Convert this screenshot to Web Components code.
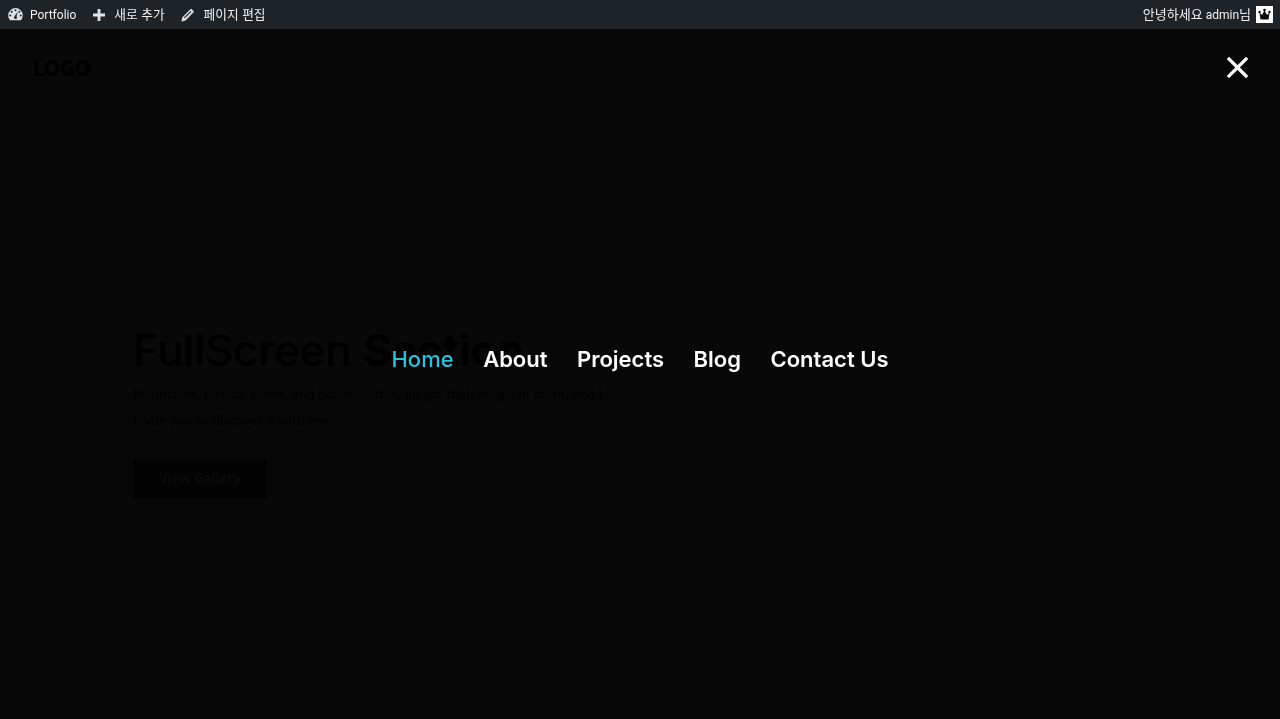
<!DOCTYPE html>
<html lang="ko">
<head>
<meta charset="utf-8">
<title>FullScreen Section</title>
<style>
  html, body { margin: 0; height: 100%; }
  body { background: #080808; overflow: hidden; }
</style>
</head>
<body>
<admin-bar>
  <bar-item slot="left" label="Portfolio" gap="7" latin>
    <svg slot="icon" width="15" height="15" viewBox="0 0 15 15"><path fill="#dfe0e1" d="M7.500 1A7.300 7.300 0 0 0 .2 8.300c0 1.900.7 3.600 1.900 4.900h10.800a7.300 7.300 0 0 0 1.900-4.900A7.300 7.300 0 0 0 7.500 1Z"/><g fill="#1d2327"><circle cx="7.500" cy="3.200" r="1"/><circle cx="3.700" cy="4.700" r="1"/><circle cx="11.300" cy="4.700" r="1"/><circle cx="2.300" cy="8.400" r="1"/><circle cx="12.700" cy="8.400" r="1"/><path d="M9.800 4.600 8.500 9.300a1.500 1.500 0 1 1-2 0Z"/></g></svg>
  </bar-item>
  <bar-item slot="left" label="새로 추가" gap="9">
    <svg slot="icon" style="margin-left:1px" width="12" height="12" viewBox="0 0 12 12" fill="#e4e5e6"><path d="M4.600 0h2.800v4.600H12v2.800H7.400V12H4.600V7.400H0V4.600h4.600Z"/></svg>
  </bar-item>
  <bar-item slot="left" label="페이지 편집" gap="10">
    <svg slot="icon" width="13" height="14" viewBox="0 0 13 14"><path fill="#dfe0e1" stroke="#dfe0e1" stroke-width=".6" stroke-linejoin="round" d="M.8 13.200 1.600 9.300 9.400 1.500a1 1 0 0 1 1.400 0l1.400 1.400a1 1 0 0 1 0 1.400L4.500 12.200Z"/><path fill="none" stroke="#1d2327" stroke-width="1.200" d="M3.300 9.900 10 3.400"/></svg>
  </bar-item>
  <bar-greeting slot="right"></bar-greeting>
</admin-bar>

<site-hero>
  <site-logo slot="logo">LOGO</site-logo>
  <span slot="title">FullScreen <b>Section</b></span>
  <span slot="text">Mountains, forests, rivers, and oceans – they all got their magic in them, and I<br>invite you to discover it with me.</span>
  <span slot="action">View Gallery</span>
</site-hero>

<menu-overlay>
  <nav-link active>Home</nav-link>
  <nav-link>About</nav-link>
  <nav-link>Projects</nav-link>
  <nav-link>Blog</nav-link>
  <nav-link>Contact Us</nav-link>
</menu-overlay>

<script>
const KO_STACK = '"Noto Sans CJK KR", "Noto Sans", sans-serif';

class AdminBar extends HTMLElement {
  constructor() {
    super();
    this.attachShadow({ mode: 'open' });
  }
  connectedCallback() {
    this.shadowRoot.innerHTML = `
      <style>
        :host {
          position: fixed;
          top: 0;
          left: 0;
          right: 0;
          z-index: 10;
          display: flex;
          justify-content: space-between;
          align-items: center;
          height: 29px;
          background: #1d2327;
          color: #f0f0f1;
          font: 12.7px/25px ${KO_STACK};
        }
        .left { display: flex; gap: 16px; padding-left: 8px; }
        .right { display: flex; padding-right: 7px; }
      </style>
      <div class="left"><slot name="left"></slot></div>
      <div class="right"><slot name="right"></slot></div>
    `;
  }
}

class BarItem extends HTMLElement {
  constructor() {
    super();
    this.attachShadow({ mode: 'open' });
  }
  connectedCallback() {
    const gap = this.getAttribute('gap') || 7;
    this.shadowRoot.innerHTML = `
      <style>
        :host { display: flex; align-items: center; height: 29px; gap: ${gap}px; }
        span { margin-bottom: 2px; }
        :host([latin]) span { font: 12px/25px Roboto, sans-serif; margin: 2px 0 0; }
        ::slotted(svg) { display: block; }
      </style>
      <slot name="icon"></slot>
      <span>${this.getAttribute('label')}</span>
    `;
  }
}

class BarGreeting extends HTMLElement {
  constructor() {
    super();
    this.attachShadow({ mode: 'open' });
  }
  connectedCallback() {
    this.shadowRoot.innerHTML = `
      <style>
        :host { display: flex; align-items: center; gap: 5px; height: 29px; }
        .name { display: flex; gap: 3px; font-size: 13px; }
        .latin { font: 12px/25px Roboto, sans-serif; }
        .avatar { display: block; width: 17px; height: 17px; background: #fff; }
      </style>
      <div class="name"><span>안녕하세요</span><span><span class="latin">admin</span>님</span></div>
      <svg class="avatar" viewBox="0 0 17 17"><g fill="#0b0b0b"><circle cx="8.500" cy="4" r="1.300"/><circle cx="3.500" cy="6" r="1.200"/><circle cx="13.500" cy="6" r="1.200"/><path d="M3.500 6.500 6 9 8.500 4.500 11 9 13.500 6.500 12.500 13.500H4.500Z"/></g></svg>
    `;
  }
}

class SiteHero extends HTMLElement {
  constructor() {
    super();
    this.attachShadow({ mode: 'open' });
  }
  connectedCallback() {
    this.shadowRoot.innerHTML = `
      <style>
        :host {
          display: block;
          height: 719px;
          box-sizing: border-box;
          padding-top: 53px;
          color: #000;
        }
        .head { padding-left: 33px; height: 29px; }
        .body { padding: 238px 0 0 133px; }
        h1 {
          margin: 0;
          font: 500 44px/60px Inter, "Liberation Sans", sans-serif;
          letter-spacing: -0.28px;
          white-space: nowrap;
        }
        p {
          margin: 1px 0 0;
          font: 12.9px/26px "Noto Sans CJK KR", "Noto Sans", sans-serif;
          white-space: nowrap;
        }
        .btn {
          display: flex;
          align-items: center;
          justify-content: center;
          box-sizing: border-box;
          width: 134px;
          height: 40px;
          margin-top: 26px;
          padding-bottom: 3px;
          background: #030303;
          color: #0c0c0c;
          font: 700 13.2px "Noto Sans CJK KR", "Noto Sans", sans-serif;
        }
      </style>
      <div class="head"><slot name="logo"></slot></div>
      <div class="body">
        <h1><slot name="title"></slot></h1>
        <p><slot name="text"></slot></p>
        <div class="btn"><slot name="action"></slot></div>
      </div>
    `;
  }
}

class SiteLogo extends HTMLElement {
  constructor() {
    super();
    this.attachShadow({ mode: 'open' }).innerHTML = `
      <style>
        :host { display: block; font: 700 20.6px/28px "Noto Sans CJK KR", "Noto Sans", sans-serif; color: #000; }
      </style>
      <slot></slot>
    `;
  }
}

class MenuOverlay extends HTMLElement {
  constructor() {
    super();
    this.attachShadow({ mode: 'open' });
  }
  connectedCallback() {
    this.shadowRoot.innerHTML = `
      <style>
        :host {
          position: fixed;
          inset: 0;
          box-sizing: border-box;
          padding-bottom: 2px;
          display: flex;
          align-items: center;
          justify-content: center;
          gap: 29.5px;
        }
        .close {
          position: absolute;
          top: 57px;
          left: 1227px;
          width: 21px;
          height: 21px;
          display: block;
        }
      </style>
      <svg class="close" viewBox="0 0 21 21"><path d="M2 2 19 19M19 2 2 19" stroke="#fff" stroke-width="3.200" stroke-linecap="square" fill="none"/></svg>
      <slot></slot>
    `;
  }
}

class NavLink extends HTMLElement {
  constructor() {
    super();
    this.attachShadow({ mode: 'open' }).innerHTML = `
      <style>
        :host {
          display: block;
          color: #fff;
          font: 600 22px/30px Inter, "Liberation Sans", sans-serif;
          white-space: nowrap;
        }
        :host([active]) { color: #2fbfdc; font-weight: 500; }
      </style>
      <slot></slot>
    `;
  }
}

customElements.define('admin-bar', AdminBar);
customElements.define('bar-item', BarItem);
customElements.define('bar-greeting', BarGreeting);
customElements.define('site-hero', SiteHero);
customElements.define('site-logo', SiteLogo);
customElements.define('menu-overlay', MenuOverlay);
customElements.define('nav-link', NavLink);
</script>
</body>
</html>
